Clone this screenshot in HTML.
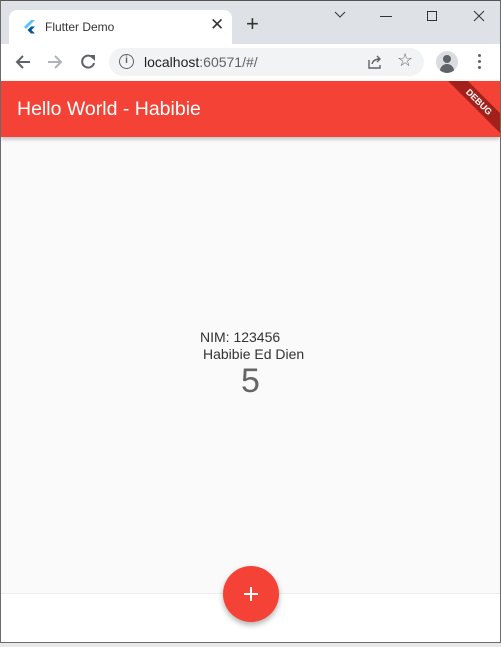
<!DOCTYPE html>
<html><head><style>
*{margin:0;padding:0;box-sizing:border-box}
body{width:501px;height:647px;overflow:hidden;background:#e8e8e8;font-family:"Liberation Sans",sans-serif;position:relative}
.win{position:absolute;left:0;top:0;width:501px;height:643px;border:1px solid #6b6b6b;border-top-color:#555;background:#fff;overflow:hidden}
.tabs{position:absolute;left:0;top:0;width:100%;height:43px;background:#dee1e6}
.tab{position:absolute;left:8px;top:9px;width:223px;height:34px;background:#fff;border-radius:8px 8px 0 0}
.abs{position:absolute}
.tool{position:absolute;top:43px;left:0;width:100%;height:37px;background:#fff}
.omni{position:absolute;left:108px;top:4px;width:315px;height:28px;border-radius:14px;background:#f1f3f4}
.appbar{position:absolute;top:80px;left:0;width:100%;height:56px;background:#f44336;box-shadow:0 2px 4px rgba(0,0,0,.25);overflow:hidden;z-index:2}
.body{position:absolute;top:136px;left:0;width:100%;height:456px;background:#fafafa}
.bottom{position:absolute;top:592px;left:0;width:100%;height:51px;background:#fff;border-top:1px solid #ececec}
.fab{position:absolute;left:222px;top:565px;width:56px;height:56px;border-radius:50%;background:#f44336;box-shadow:0 3px 6px rgba(0,0,0,.3);z-index:3}
</style></head><body>
<div class="win">
<div class="tabs">
 <div class="tab">
  <svg class="abs" style="left:15px;top:10px" width="12" height="14" viewBox="0 0 12 14"><path d="M7 0L0 7l2 2L11 0z" fill="#54c5f8"/><path d="M7 6.5L3.5 10 7 13.5h4L7.5 10 11 6.5z" fill="#01579b"/></svg>
  <div class="abs" style="left:36px;top:10px;font-size:12px;color:#333">Flutter Demo</div>
  <div class="abs" style="left:201px;top:5px;font-size:17px;color:#333">✕</div>
 </div>
 <div class="abs" style="left:245px;top:12px;font-size:22px;color:#333;line-height:22px">+</div>
 <svg class="abs" style="left:333px;top:10px" width="12" height="8"><path d="M1 1l5 5 5-5" stroke="#333" fill="none"/></svg>
 <div class="abs" style="left:379px;top:15px;width:12px;height:1px;background:#333"></div>
 <div class="abs" style="left:426px;top:10px;width:10px;height:10px;border:1px solid #333"></div>
 <svg class="abs" style="left:472px;top:9px" width="12" height="12"><path d="M1 1l10 10M11 1L1 11" stroke="#333"/></svg>
</div>
<div class="tool">
 <svg class="abs" style="left:13px;top:9px" width="18" height="18" viewBox="0 0 18 18"><path d="M16 9H3M9 3L3 9l6 6" stroke="#5f6368" stroke-width="2" fill="none"/></svg>
 <svg class="abs" style="left:45px;top:9px" width="18" height="18" viewBox="0 0 18 18"><path d="M2 9h13M9 3l6 6-6 6" stroke="#b0b3b6" stroke-width="2" fill="none"/></svg>
 <svg class="abs" style="left:78px;top:9px" width="18" height="18" viewBox="0 0 18 18"><path d="M14 5A6 6 0 1 0 15 10" stroke="#5f6368" stroke-width="2" fill="none"/><path d="M10 2h6v6z" fill="#5f6368"/></svg>
 <div class="omni">
  <div class="abs" style="left:10px;top:6px;width:15px;height:15px;border:1.6px solid #5f6368;border-radius:50%;font-size:10px;text-align:center;line-height:12px;color:#5f6368;font-weight:bold">i</div>
  <div class="abs" style="left:35px;top:6px;font-size:14px;color:#202124">localhost<span style="color:#5f6368">:60571/#/</span></div>
  <svg class="abs" style="left:258px;top:6px" width="16" height="16"><path d="M2 6v8h11v-3M5 10c1-4 4-5 8-5M10 2l3 3-3 3" stroke="#5f6368" stroke-width="1.4" fill="none"/></svg>
  <div class="abs" style="left:288px;top:2px;font-size:18px;color:#5f6368">☆</div>
 </div>
 <div class="abs" style="left:435px;top:7px;width:22px;height:22px;border-radius:50%;background:#dadce0;overflow:hidden">
  <div class="abs" style="left:7px;top:4px;width:8px;height:8px;border-radius:50%;background:#5f6368"></div>
  <div class="abs" style="left:4px;top:13px;width:14px;height:10px;border-radius:7px 7px 0 0;background:#5f6368"></div>
 </div>
 <div class="abs" style="left:477px;top:10px;width:3px;height:3px;border-radius:50%;background:#5f6368;box-shadow:0 6px 0 #5f6368,0 12px 0 #5f6368"></div>
</div>
<div class="appbar">
 <div class="abs" style="left:16px;top:17px;font-size:19.5px;color:#fff">Hello World - Habibie</div>
 <div class="abs" style="left:432px;top:14px;width:92px;height:14px;background:#a4201a;transform:rotate(45deg);color:#fff;font-size:9px;font-weight:bold;text-align:center;line-height:14px">DEBUG</div>
</div>
<div class="body">
 <div class="abs" style="left:199px;top:192px;font-size:14px;color:#333">NIM: 123456</div>
 <div class="abs" style="left:202px;top:209px;font-size:14px;color:#333">Habibie Ed Dien</div>
 <div class="abs" style="left:240px;top:225px;font-size:34px;color:#666">5</div>
</div>
<div class="bottom"></div>
<div class="fab"><svg class="abs" style="left:20px;top:20px" width="16" height="16"><path d="M8 1v14M1 8h14" stroke="#fff" stroke-width="2"/></svg></div>
</div>
</body></html>
